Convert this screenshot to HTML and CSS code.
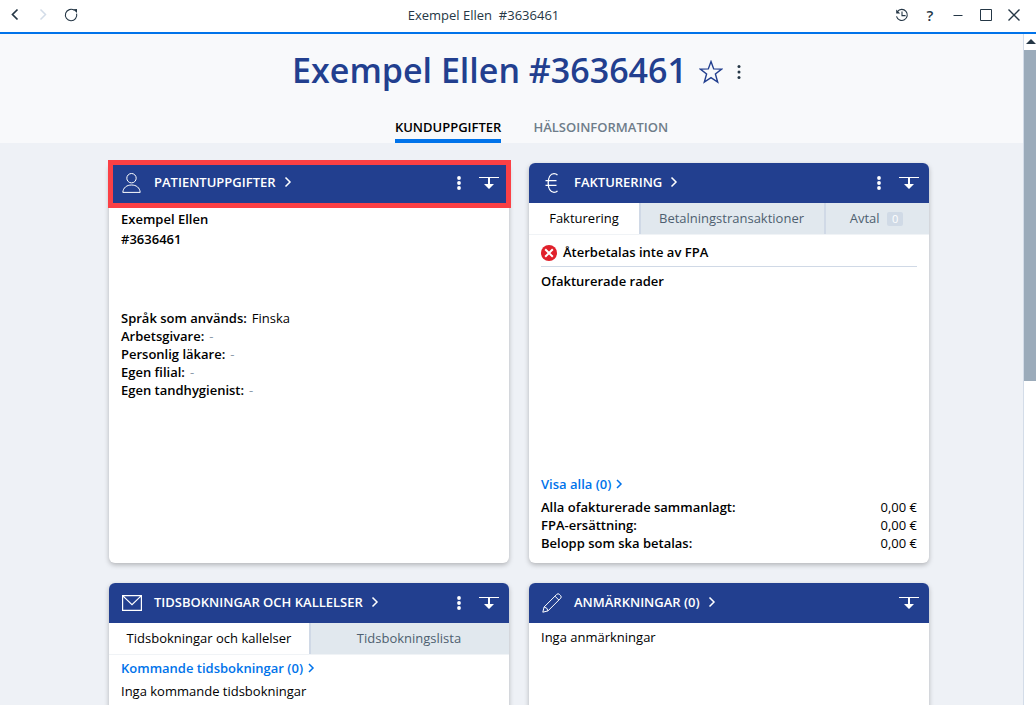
FILE: index.html
```html
<!DOCTYPE html>
<html lang="sv">
<head>
    <meta charset="UTF-8">
    <meta name="viewport" content="width=device-width, initial-scale=1.0">
    <title>Exempel Ellen #3636461</title>
    <link rel="stylesheet" href="styles.css">
</head>
<body>
    <header class="titlebar">
        <div class="titlebar-side">
            <button class="icon-btn" type="button" aria-label="Bakåt">
                <svg width="16" height="16" viewBox="0 0 16 16"><path d="M10.500 2.500l-5 5 5 5" fill="none" stroke="#253746" stroke-width="1.7"/></svg>
            </button>
            <button class="icon-btn" type="button" aria-label="Framåt" disabled>
                <svg width="16" height="16" viewBox="0 0 16 16"><path d="M5.5 2.5l5 5-5 5" fill="none" stroke="#d3dce8" stroke-width="1.5"/></svg>
            </button>
            <button class="icon-btn" type="button" aria-label="Ladda om">
                <svg width="16" height="16" viewBox="0 0 16 16"><path d="M13.6 6.6A5.7 5.7 0 1 1 11.4 3.4" fill="none" stroke="#253746" stroke-width="1.1"/><path d="M10 2.2l4-.2v4z" fill="#253746"/></svg>
            </button>
        </div>
        <div class="titlebar-text">Exempel Ellen &nbsp;#3636461</div>
        <div class="titlebar-side">
            <button class="icon-btn" type="button" aria-label="Historik">
                <svg width="16" height="16" viewBox="0 0 16 16"><path d="M3.4 4.6a5.5 5.5 0 1 1-.9 4.8M8 4.6v4h3.6" fill="none" stroke="#253746" stroke-width="1.1"/><path d="M2.2 2.4v4h4z" fill="#253746"/></svg>
            </button>
            <button class="icon-btn help" type="button" aria-label="Hjälp">?</button>
            <button class="icon-btn" type="button" aria-label="Minimera">
                <svg width="16" height="16" viewBox="0 0 16 16"><path d="M3.5 8.5h9" fill="none" stroke="#253746"/></svg>
            </button>
            <button class="icon-btn" type="button" aria-label="Maximera">
                <svg width="16" height="16" viewBox="0 0 16 16"><path d="M2.5 2.5h11v11h-11z" fill="none" stroke="#253746"/></svg>
            </button>
            <button class="icon-btn" type="button" aria-label="Stäng">
                <svg width="16" height="16" viewBox="0 0 16 16"><path d="M2.5 2.5l11 11M13.5 2.5l-11 11" fill="none" stroke="#253746" stroke-width="1.4"/></svg>
            </button>
        </div>
    </header>

    <div class="window">
        <main class="content">
            <div class="page-head">
                <div class="page-title">
                    <h1>Exempel Ellen #3636461</h1>
                    <div class="title-actions">
                        <button class="icon-btn star" type="button" aria-label="Favorit">
                            <svg width="24" height="24" viewBox="0 0 24 24"><path d="M12 1.600l2.700 7.300 8 .2-6.300 4.900 2.300 8.200-6.700-4.500-6.700 4.500L7.600 14 1.300 9.100l8-.2z" fill="none" stroke="#223f8f" stroke-width="1.400"/></svg>
                        </button>
                        <button class="icon-btn" type="button" aria-label="Mer">
                            <svg width="16" height="16" viewBox="0 0 16 16" fill="#253746"><circle cx="8" cy="2.500" r="1.500"/><circle cx="8" cy="8" r="1.500"/><circle cx="8" cy="13.500" r="1.500"/></svg>
                        </button>
                    </div>
                </div>
                <nav class="page-tabs">
                    <a class="page-tab active" href="#">KUNDUPPGIFTER</a>
                    <a class="page-tab" href="#">HÄLSOINFORMATION</a>
                </nav>
            </div>

            <div class="cards">
                <section class="card">
                    <div class="card-head marked">
                        <svg class="card-icon" width="20" height="20" viewBox="0 0 20 20" fill="none" stroke="#fff" stroke-width="1"><circle cx="9.500" cy="5.200" r="4.700"/><path d="M.8 19.400c.4-4.800 4-7.400 8.700-7.400s8.300 2.600 8.700 7.400z"/></svg>
                        <h2><a href="#">PATIENTUPPGIFTER<svg class="chevron" width="8" height="12" viewBox="0 0 8 12"><path d="M1.500 1.500L6 6l-4.500 4.500"/></svg></a></h2>
                        <button class="icon-btn" type="button" aria-label="Mer">
                            <svg width="16" height="16" viewBox="0 0 16 16" fill="#fff"><circle cx="8" cy="3" r="1.900"/><circle cx="8" cy="8" r="1.900"/><circle cx="8" cy="13" r="1.900"/></svg>
                        </button>
                        <button class="icon-btn expand" type="button" aria-label="Fäll ut">
                            <svg width="20" height="14" viewBox="0 0 20 14"><path d="M0 1h20v1H0zM9 2h2v6h4l-5 5-5-5h4z" fill="#fff"/></svg>
                        </button>
                    </div>
                    <div class="card-body">
                        <div class="patient">
                            <strong>Exempel Ellen</strong>
                            <strong>#3636461</strong>
                        </div>
                        <dl class="facts">
                            <div><dt>Språk som används:</dt><dd>Finska</dd></div>
                            <div><dt>Arbetsgivare:</dt><dd class="empty">-</dd></div>
                            <div><dt>Personlig läkare:</dt><dd class="empty">-</dd></div>
                            <div><dt>Egen filial:</dt><dd class="empty">-</dd></div>
                            <div><dt>Egen tandhygienist:</dt><dd class="empty">-</dd></div>
                        </dl>
                    </div>
                </section>

                <section class="card">
                    <div class="card-head">
                        <svg class="card-icon" width="20" height="20" viewBox="0 0 20 20" fill="none" stroke="#fff" stroke-width="1.300"><path d="M15.500 2.200C14.700 1.200 13.400.7 12 .7 8.400.7 6.200 4.600 6.200 10s2.200 9.300 5.800 9.300c1.400 0 2.700-.5 3.500-1.500M3.500 7.700h11M3.500 12.300h11"/></svg>
                        <h2><a href="#">FAKTURERING<svg class="chevron" width="8" height="12" viewBox="0 0 8 12"><path d="M1.500 1.500L6 6l-4.500 4.500"/></svg></a></h2>
                        <button class="icon-btn" type="button" aria-label="Mer">
                            <svg width="16" height="16" viewBox="0 0 16 16" fill="#fff"><circle cx="8" cy="3" r="1.900"/><circle cx="8" cy="8" r="1.900"/><circle cx="8" cy="13" r="1.900"/></svg>
                        </button>
                        <button class="icon-btn expand" type="button" aria-label="Fäll ut">
                            <svg width="20" height="14" viewBox="0 0 20 14"><path d="M0 1h20v1H0zM9 2h2v6h4l-5 5-5-5h4z" fill="#fff"/></svg>
                        </button>
                    </div>
                    <div class="tabs tabs-billing">
                        <button class="tab active" type="button">Fakturering</button>
                        <button class="tab" type="button">Betalningstransaktioner</button>
                        <button class="tab" type="button">Avtal <span class="count">0</span></button>
                    </div>
                    <div class="card-body billing">
                        <div class="status">
                            <svg width="16" height="16" viewBox="0 0 16 16"><circle cx="8" cy="8" r="8" fill="#e0202b"/><path d="M4.200 4.200l7.600 7.600M11.800 4.200l-7.600 7.600" stroke="#fff" stroke-width="2"/></svg>
                            <strong>Återbetalas inte av FPA</strong>
                        </div>
                        <strong class="subhead">Ofakturerade rader</strong>
                        <div class="billing-foot">
                            <a class="link" href="#">Visa alla (0)<svg class="chevron" width="8" height="12" viewBox="0 0 8 12"><path d="M2 2l4 4-4 4"/></svg></a>
                            <dl class="sums">
                                <div><dt>Alla ofakturerade sammanlagt:</dt><dd>0,00 €</dd></div>
                                <div><dt>FPA-ersättning:</dt><dd>0,00 €</dd></div>
                                <div><dt>Belopp som ska betalas:</dt><dd>0,00 €</dd></div>
                            </dl>
                        </div>
                    </div>
                </section>

                <section class="card">
                    <div class="card-head">
                        <svg class="card-icon" width="20" height="20" viewBox="0 0 20 20" fill="none" stroke="#fff" stroke-width="1.200"><path d="M.6 2.600h18.800v14.800H.6zM.6 2.600l9.400 9 9.400-9"/></svg>
                        <h2><a href="#">TIDSBOKNINGAR OCH KALLELSER<svg class="chevron" width="8" height="12" viewBox="0 0 8 12"><path d="M1.500 1.500L6 6l-4.500 4.500"/></svg></a></h2>
                        <button class="icon-btn" type="button" aria-label="Mer">
                            <svg width="16" height="16" viewBox="0 0 16 16" fill="#fff"><circle cx="8" cy="3" r="1.900"/><circle cx="8" cy="8" r="1.900"/><circle cx="8" cy="13" r="1.900"/></svg>
                        </button>
                        <button class="icon-btn expand" type="button" aria-label="Fäll ut">
                            <svg width="20" height="14" viewBox="0 0 20 14"><path d="M0 1h20v1H0zM9 2h2v6h4l-5 5-5-5h4z" fill="#fff"/></svg>
                        </button>
                    </div>
                    <div class="tabs">
                        <button class="tab active" type="button">Tidsbokningar och kallelser</button>
                        <button class="tab" type="button">Tidsbokningslista</button>
                    </div>
                    <div class="card-body bookings">
                        <a class="link" href="#">Kommande tidsbokningar (0)<svg class="chevron" width="8" height="12" viewBox="0 0 8 12"><path d="M2 2l4 4-4 4"/></svg></a>
                        <p>Inga kommande tidsbokningar</p>
                    </div>
                </section>

                <section class="card">
                    <div class="card-head">
                        <svg class="card-icon" width="20" height="20" viewBox="0 0 20 20" fill="none" stroke="#fff" stroke-width="1"><path d="M.8 19.200l1.300-5.200L14.800 1.300q1.300-1.100 2.500 0l1.400 1.400q1.100 1.300 0 2.500L6 17.900zM13 3.200L16.800 7M2.100 14Q5.500 14.500 6 17.900"/></svg>
                        <h2><a href="#">ANMÄRKNINGAR (0)<svg class="chevron" width="8" height="12" viewBox="0 0 8 12"><path d="M1.500 1.500L6 6l-4.500 4.500"/></svg></a></h2>
                        <button class="icon-btn expand" type="button" aria-label="Fäll ut">
                            <svg width="20" height="14" viewBox="0 0 20 14"><path d="M0 1h20v1H0zM9 2h2v6h4l-5 5-5-5h4z" fill="#fff"/></svg>
                        </button>
                    </div>
                    <div class="card-body">
                        <p>Inga anmärkningar</p>
                    </div>
                </section>
            </div>
        </main>

        <div class="scrollbar">
            <svg width="12" height="16" viewBox="0 0 12 16"><path d="M2 10l5-5 5 5z" fill="#253746"/></svg>
            <div class="thumb"></div>
        </div>
    </div>
</body>
</html>
```

FILE: styles.css
```css
* {
    box-sizing: border-box;
}

body {
    margin: 0;
    height: 100vh;
    display: flex;
    flex-direction: column;
    overflow: hidden;
    font-family: "Segoe UI", "Open Sans", sans-serif;
    font-size: 13px;
    line-height: 18px;
    color: #000;
    background-color: #fff;
}

h1, h2, p, dl, dd {
    margin: 0;
}

a {
    text-decoration: none;
}

strong, dt {
    font-weight: 600;
}

.icon-btn {
    display: flex;
    align-items: center;
    justify-content: center;
    width: 16px;
    height: 16px;
    padding: 0;
    border: 0;
    background: none;
    font-family: inherit;
    color: #253746;
    cursor: pointer;
}

.icon-btn svg {
    flex: none;
}

/* Window bar */
.titlebar {
    display: flex;
    align-items: center;
    justify-content: space-between;
    height: 34px;
    padding: 0 14px 2px 7px;
    border-bottom: 2px solid #0073ea;
}

.titlebar-side {
    display: flex;
    gap: 12px;
}

.titlebar-text {
    padding-right: 6px;
    color: #253746;
}

.help {
    font-size: 15px;
    font-weight: 600;
}

.window {
    display: flex;
    flex: 1;
    min-height: 0;
}

.content {
    flex: 1;
    overflow: hidden;
    background-color: #eef1f6;
}

.scrollbar {
    width: 13px;
    border-left: 1px solid #d3dce8;
}

.scrollbar svg {
    display: block;
}

.thumb {
    height: 331px;
    background-color: #9babba;
}

/* Customer name and main tabs */
.page-head {
    padding: 12px 0 0 16px;
    background-color: #f8f9fb;
}

.page-title {
    display: flex;
    align-items: center;
    justify-content: center;
    gap: 12px;
    color: #223f8f;
}

.page-title h1 {
    font-size: 34px;
    font-weight: 600;
    line-height: 48px;
}

.title-actions {
    display: flex;
    align-items: center;
    gap: 8px;
    padding-top: 4px;
}

.star {
    width: 24px;
    height: 24px;
}

.page-tabs {
    display: flex;
    justify-content: center;
    gap: 32px;
    padding: 24px 0 0 24px;
}

.page-tab {
    padding-bottom: 3px;
    border-bottom: 4px solid transparent;
    font-weight: 600;
    color: #6f7d8a;
}

.page-tab.active {
    border-color: #0073ea;
    color: #000;
}

/* Cards */
.cards {
    display: grid;
    grid-template-columns: 1fr 1fr;
    gap: 20px;
    max-width: 835px;
    margin: 0 auto;
    padding: 20px 0 20px 15px;
}

.card {
    display: flex;
    flex-direction: column;
    min-height: 400px;
    border-radius: 6px;
    background-color: #fff;
    box-shadow: 0 2px 5px rgba(0, 0, 0, 0.25);
}

.card-head {
    position: relative;
    display: flex;
    align-items: center;
    height: 40px;
    padding: 0 10px 0 13px;
    border-radius: 6px 6px 0 0;
    background-color: #223f8f;
}

.card-head h2 {
    flex: 1;
    padding: 0 0 2px 12px;
    font-size: 13px;
    font-weight: 600;
}

.card-head a {
    color: #fff;
}

.card-head .expand {
    width: 20px;
    margin-left: 12px;
}

.marked::after {
    content: "";
    position: absolute;
    inset: -3px -2px -5px -1px;
    border: 5px solid #fb4045;
    pointer-events: none;
}

.chevron {
    margin-left: 8px;
    vertical-align: -1px;
    fill: none;
    stroke: currentColor;
    stroke-width: 1.5;
}

.card-body {
    flex: 1;
    padding: 5px 12px 11px;
}

.tabs {
    display: grid;
    grid-template-columns: 1fr 1fr;
    height: 32px;
    border-bottom: 1px solid #f0f3f6;
}

.tabs-billing {
    grid-template-columns: 110px 1fr 105px;
}

.tab {
    padding: 0 2px 2px 0;
    border: 0;
    border-left: 2px solid #d0d9e6;
    background-color: #e1e8ee;
    font: inherit;
    color: #4e5f70;
    cursor: pointer;
}

.tab.active {
    border-left-color: #fff;
    background-color: #fff;
    color: #000;
}

.count {
    display: inline-block;
    margin-left: 4px;
    padding: 0 5px;
    border-radius: 2px;
    background-color: #d0dae6;
    font-size: 11px;
    line-height: 14px;
    color: #fff;
}

.patient {
    display: flex;
    flex-direction: column;
    padding-top: 1px;
    line-height: 20px;
}

.facts {
    padding-top: 60px;
}

.facts div {
    display: flex;
    gap: 5px;
}

.empty {
    color: #8d9cab;
}

.billing {
    display: flex;
    flex-direction: column;
}

.status {
    display: flex;
    align-items: flex-end;
    gap: 6px;
    padding: 3px 0 5px;
    border-bottom: 1px solid #d0d9e6;
}

.subhead {
    padding-top: 5px;
}

.billing-foot {
    margin-top: auto;
}

.link {
    font-weight: 600;
    color: #0073ea;
}

.link .chevron {
    margin-left: 4px;
}

.sums {
    padding-top: 5px;
}

.sums div {
    display: flex;
    justify-content: space-between;
}

.bookings {
    padding-top: 4px;
}

.bookings p {
    padding-top: 5px;
}
```
